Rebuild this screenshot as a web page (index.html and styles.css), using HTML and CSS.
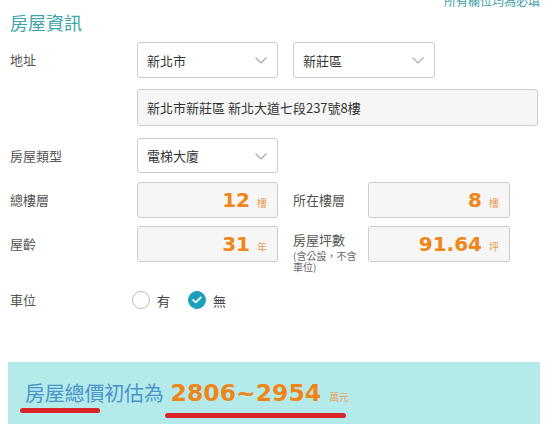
FILE: index.html
```html
<!DOCTYPE html>
<html lang="zh-Hant">
<head>
<meta charset="utf-8">
<link rel="stylesheet" href="styles.css">
</head>
<body>
<div class="page">
  <div class="note-row"><span class="note">所有欄位均為必填</span></div>
  <h2 class="title">房屋資訊</h2>

  <div class="row r-addr1">
    <div class="label">地址</div>
    <div class="select w141"><span>新北市</span><svg class="chev" width="12" height="7" viewBox="0 0 12 7"><polyline points="0.5,0.5 6,6 11.5,0.5" fill="none" stroke="#aaa" stroke-width="1.2"/></svg></div>
    <div class="spacer"></div>
    <div class="select w142"><span>新莊區</span><svg class="chev" width="12" height="7" viewBox="0 0 12 7"><polyline points="0.5,0.5 6,6 11.5,0.5" fill="none" stroke="#aaa" stroke-width="1.2"/></svg></div>
  </div>

  <div class="row r-addr2">
    <div class="label"></div>
    <div class="input address">新北市新莊區 新北大道七段237號8樓</div>
  </div>

  <div class="row r-type">
    <div class="label">房屋類型</div>
    <div class="select w141 h35"><span>電梯大廈</span><svg class="chev" width="12" height="7" viewBox="0 0 12 7"><polyline points="0.5,0.5 6,6 11.5,0.5" fill="none" stroke="#aaa" stroke-width="1.2"/></svg></div>
  </div>

  <div class="row r-floor">
    <div class="label">總樓層</div>
    <div class="input value w141"><span class="num">12</span><span class="unit">樓</span></div>
    <div class="spacer"></div>
    <div class="label2">所在樓層</div>
    <div class="input value w142"><span class="num">8</span><span class="unit">樓</span></div>
  </div>

  <div class="row r-age">
    <div class="label">屋齡</div>
    <div class="input value w141"><span class="num">31</span><span class="unit">年</span></div>
    <div class="spacer"></div>
    <div class="label2 tall"><span class="main">房屋坪數</span><small>(含公設，不含<br>車位)</small></div>
    <div class="input value w142"><span class="num">91.64</span><span class="unit">坪</span></div>
  </div>

  <div class="row r-park">
    <div class="label">車位</div>
    <div class="radios">
      <label class="radio"><span class="circle"></span>有</label>
      <label class="radio"><span class="circle on"><svg width="10" height="8" viewBox="0 0 10 8"><polyline points="1.2,4 3.8,6.4 8.8,1.4" fill="none" stroke="#fff" stroke-width="1.8" stroke-linecap="round" stroke-linejoin="round"/></svg></span>無</label>
    </div>
  </div>
</div>

<div class="result">
  <span class="result-text"><span class="ul1">房屋總</span>價初估為</span>
  <span class="ul2"><span class="big">2806~2954</span><span class="wan">萬元</span></span>
</div>
</body>
</html>
```
FILE: styles.css
```css
* { box-sizing: border-box; }
html, body { margin: 0; padding: 0; background: #fff; overflow: hidden; }
body {
  font-family: "Noto Sans CJK TC", "Noto Sans", sans-serif;
  color: #555;
  width: 553px;
  height: 424px;
}
.page { padding: 0 13px 0 10px; }
.note-row {
  display: flex;
  justify-content: flex-end;
  margin-top: -7px;
  height: 17px;
  line-height: 16px;
}
.note { font-size: 12px; color: #3a9ea6; }
.title {
  margin: 0 0 8px;
  height: 24px;
  line-height: 24px;
  font-size: 18px;
  font-weight: normal;
  color: #3ba5ab;
}
.row { display: flex; align-items: center; }
.label { width: 127px; font-size: 13px; line-height: 18px; color: #555; flex: none; }
.label2 { width: 75px; font-size: 13px; line-height: 18px; color: #555; flex: none; }
.label2.tall { align-self: flex-start; height: 36px; padding-top: 6px; }
.label2 .main { display: block; line-height: 16px; }
.label2 small { display: block; font-size: 10px; line-height: 11px; margin-top: 2px; color: #666; }
.spacer { width: 15px; flex: none; }
.w141 { width: 141px; flex: none; }
.w142 { width: 142px; flex: none; }
.select, .input {
  height: 36px;
  border: 1px solid #ccc;
  border-radius: 3px;
  display: flex;
  align-items: center;
  font-size: 13px;
  color: #333;
}
.select { background: #fff; padding: 0 10px 0 9px; justify-content: space-between; }
.select.h35 { height: 35px; }
.chev { margin-top: 1px; }
.input { background: #f6f6f6; }
.r-addr2 { margin-top: 11px; }
.address { width: 401px; height: 37px; padding-left: 9px; }
.r-type { margin-top: 12px; }
.r-floor { margin-top: 9px; }
.r-age { margin-top: 8px; height: 36px; }
.value { justify-content: flex-end; padding-right: 10px; align-items: center; }
.num {
  font-family: "DejaVu Sans", Verdana, sans-serif;
  font-weight: bold;
  font-size: 20px;
  color: #f08518;
  line-height: 24px;
}
.unit { font-size: 10px; color: #e99a55; margin-left: 7px; margin-top: 4px; }
.r-park { margin-top: 26px; height: 24px; }
.radios { display: flex; align-items: center; margin-left: -5px; }
.radio { display: flex; align-items: center; font-size: 13px; color: #444; margin-right: 18px; }
.circle {
  width: 18px; height: 18px;
  border-radius: 50%;
  border: 1px solid #bbb;
  background: #fff;
  margin-right: 7px;
  display: flex; align-items: center; justify-content: center;
}
.circle.on { background: #1c9fbd; border-color: #1c9fbd; }
.result {
  margin: 50px 0 0 8px;
  width: 532px;
  height: 62px;
  background: #b4ebea;
  padding: 16px 0 0 17px;
  display: flex;
  align-items: baseline;
  line-height: 30px;
}
.result-text { font-size: 20px; font-weight: normal; color: #4a93cb; letter-spacing: -0.2px; }
.ul1, .ul2 { position: relative; }
.ul1::after {
  content: "";
  position: absolute;
  left: -5px; width: 80px;
  bottom: -6px; height: 5px;
  border-radius: 3px;
  background: #d92429;
}
.ul2 { margin-left: 7px; }
.ul2::after {
  content: "";
  position: absolute;
  left: -6px; width: 181px;
  bottom: -6px; height: 5px;
  border-radius: 3px;
  background: #d92429;
}
.big {
  font-family: "DejaVu Sans", Verdana, sans-serif;
  font-weight: bold;
  font-size: 23.5px;
  color: #f08518;
}
.wan { font-size: 10px; color: #e9a060; margin-left: 8px; }
```
